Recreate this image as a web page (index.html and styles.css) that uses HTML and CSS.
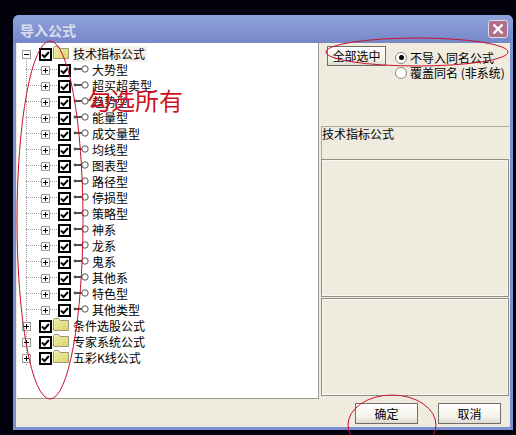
FILE: index.html
```html
<!DOCTYPE html>
<html lang="zh">
<head>
<meta charset="utf-8">
<title>导入公式</title>
<link rel="stylesheet" href="styles.css">
</head>
<body>
<svg width="0" height="0" class="defs">
  <defs>
    <linearGradient id="fg" x1="0" y1="0" x2="1" y2="1"><stop offset="0" stop-color="#f4efb0"/><stop offset="1" stop-color="#dcd36a"/></linearGradient>
  </defs>
  <symbol id="chk" viewBox="0 0 13 13"><rect x="1" y="1" width="11" height="11" fill="#fff" stroke="#000" stroke-width="2"/><path d="M3 6.500l2.500 2.500 4.500-5" fill="none" stroke="#000" stroke-width="2"/></symbol>
  <symbol id="plus" viewBox="0 0 9 9"><rect x=".5" y=".5" width="8" height="8" fill="#fff" stroke="#999"/><path d="M2 4.500h5M4.500 2v5" stroke="#000"/></symbol>
  <symbol id="minus" viewBox="0 0 9 9"><rect x=".5" y=".5" width="8" height="8" fill="#fff" stroke="#999"/><path d="M2 4.500h5" stroke="#000"/></symbol>
  <symbol id="key" viewBox="0 0 16 10"><path d="M1 5h8" stroke="#222" stroke-width="1.600"/><circle cx="2" cy="5" r="1.400" fill="#555"/><circle cx="12" cy="5" r="3.200" fill="#fff" stroke="#555"/></symbol>
  <symbol id="folder" viewBox="0 0 16 13"><path d="M.5 12.500V1.500L1.500.5h4l1.500 2H15.500v10z" fill="url(#fg)" stroke="#9a9a78"/></symbol>
</svg>
<main class="window">
  <header class="titlebar">
    <span class="title">导入公式</span>
    <span class="close"><svg viewBox="0 0 12 12" width="12" height="12"><path d="M1.500 1.500l9 9M10.500 1.500l-9 9" stroke="#fff" stroke-width="2.400"/></svg></span>
  </header>
  <div class="client">
    <div class="content">
      <section class="tree">
        <div class="row root first"><svg class="exp"><use href="#minus"/></svg><svg class="cb"><use href="#chk"/></svg><svg class="fld"><use href="#folder"/></svg><span class="lab sel">技术指标公式</span></div>
        <div class="row child"><svg class="exp"><use href="#plus"/></svg><svg class="cb"><use href="#chk"/></svg><svg class="key"><use href="#key"/></svg><span class="lab">大势型</span></div>
        <div class="row child"><svg class="exp"><use href="#plus"/></svg><svg class="cb"><use href="#chk"/></svg><svg class="key"><use href="#key"/></svg><span class="lab">超买超卖型</span></div>
        <div class="row child"><svg class="exp"><use href="#plus"/></svg><svg class="cb"><use href="#chk"/></svg><svg class="key"><use href="#key"/></svg><span class="lab">趋势型</span></div>
        <div class="row child"><svg class="exp"><use href="#plus"/></svg><svg class="cb"><use href="#chk"/></svg><svg class="key"><use href="#key"/></svg><span class="lab">能量型</span></div>
        <div class="row child"><svg class="exp"><use href="#plus"/></svg><svg class="cb"><use href="#chk"/></svg><svg class="key"><use href="#key"/></svg><span class="lab">成交量型</span></div>
        <div class="row child"><svg class="exp"><use href="#plus"/></svg><svg class="cb"><use href="#chk"/></svg><svg class="key"><use href="#key"/></svg><span class="lab">均线型</span></div>
        <div class="row child"><svg class="exp"><use href="#plus"/></svg><svg class="cb"><use href="#chk"/></svg><svg class="key"><use href="#key"/></svg><span class="lab">图表型</span></div>
        <div class="row child"><svg class="exp"><use href="#plus"/></svg><svg class="cb"><use href="#chk"/></svg><svg class="key"><use href="#key"/></svg><span class="lab">路径型</span></div>
        <div class="row child"><svg class="exp"><use href="#plus"/></svg><svg class="cb"><use href="#chk"/></svg><svg class="key"><use href="#key"/></svg><span class="lab">停损型</span></div>
        <div class="row child"><svg class="exp"><use href="#plus"/></svg><svg class="cb"><use href="#chk"/></svg><svg class="key"><use href="#key"/></svg><span class="lab">策略型</span></div>
        <div class="row child"><svg class="exp"><use href="#plus"/></svg><svg class="cb"><use href="#chk"/></svg><svg class="key"><use href="#key"/></svg><span class="lab">神系</span></div>
        <div class="row child"><svg class="exp"><use href="#plus"/></svg><svg class="cb"><use href="#chk"/></svg><svg class="key"><use href="#key"/></svg><span class="lab">龙系</span></div>
        <div class="row child"><svg class="exp"><use href="#plus"/></svg><svg class="cb"><use href="#chk"/></svg><svg class="key"><use href="#key"/></svg><span class="lab">鬼系</span></div>
        <div class="row child"><svg class="exp"><use href="#plus"/></svg><svg class="cb"><use href="#chk"/></svg><svg class="key"><use href="#key"/></svg><span class="lab">其他系</span></div>
        <div class="row child"><svg class="exp"><use href="#plus"/></svg><svg class="cb"><use href="#chk"/></svg><svg class="key"><use href="#key"/></svg><span class="lab">特色型</span></div>
        <div class="row child"><svg class="exp"><use href="#plus"/></svg><svg class="cb"><use href="#chk"/></svg><svg class="key"><use href="#key"/></svg><span class="lab">其他类型</span></div>
        <div class="row root"><svg class="exp"><use href="#plus"/></svg><svg class="cb"><use href="#chk"/></svg><svg class="fld"><use href="#folder"/></svg><span class="lab">条件选股公式</span></div>
        <div class="row root"><svg class="exp"><use href="#plus"/></svg><svg class="cb"><use href="#chk"/></svg><svg class="fld"><use href="#folder"/></svg><span class="lab">专家系统公式</span></div>
        <div class="row root"><svg class="exp"><use href="#plus"/></svg><svg class="cb"><use href="#chk"/></svg><svg class="fld"><use href="#folder"/></svg><span class="lab">五彩K线公式</span></div>
      </section>
      <aside class="side">
        <div class="options">
          <button class="btn selall">全部选中</button>
          <div class="radios">
            <label class="radio"><i class="dot on"></i>不导入同名公式</label>
            <label class="radio"><i class="dot"></i>覆盖同名 (非系统)</label>
          </div>
        </div>
        <div class="info">技术指标公式</div>
        <div class="pane mid"></div>
        <div class="pane low"></div>
      </aside>
    </div>
    <footer class="actions">
      <button class="btn act">确定</button>
      <button class="btn act">取消</button>
    </footer>
  </div>
</main>
<svg class="marks" width="516" height="435" viewBox="0 0 516 435">
  <g fill="none" stroke="#c8102e" stroke-width="1">
    <ellipse cx="50" cy="220" rx="33" ry="179"/>
    <ellipse cx="417" cy="52" rx="91" ry="14"/>
    <ellipse cx="392" cy="425" rx="44" ry="30"/>
  </g>
</svg>
<div class="note">勾选所有</div>
</body>
</html>
```
FILE: styles.css
```css
* { box-sizing: border-box; }
html, body { margin: 0; padding: 0; }
body {
  width: 516px; height: 435px; background: #02020e; overflow: hidden; position: relative;
  font: 12px/16px "Noto Sans CJK SC", "Liberation Sans", sans-serif; color: #000;
}
.defs { position: absolute; }
.window {
  margin: 15px 0 0 13px; width: 500px; height: 415px;
  background: #7d8fd0; border-radius: 6px 6px 0 0;
  display: flex; flex-direction: column;
}
.titlebar {
  height: 28px; padding: 5px 5px 0 7px; display: flex; justify-content: space-between; align-items: flex-start;
  background: linear-gradient(#8fa3dc, #7687c9);
  border-radius: 6px 6px 0 0;
}
.title { color: #d9deee; font-size: 14px; font-weight: 700; line-height: 20px; }
.close {
  width: 20px; height: 18px; display: flex; align-items: center; justify-content: center;
  background: #b06f88; border: 1px solid #e3dbe4; border-radius: 3px;
}
.client {
  flex: 1; margin: 0 3px 3px; background: #efebdf;
  display: flex; flex-direction: column;
}
.content { display: flex; height: 356px; gap: 2px; }
.tree {
  width: 302px; margin-left: 1px; background: #fff; border-right: 1px solid #9a9a90; border-bottom: 1px solid #9a9a90;
  padding-top: 3px;
}
.row {
  height: 16px; display: flex; align-items: center; white-space: nowrap;
  background-repeat: no-repeat;
}
.root {
  padding-left: 5px;
  background-image: repeating-linear-gradient(#999 0 1px, transparent 1px 2px);
  background-size: 1px 100%;
  background-position: 9px 0;
}
.first { background-size: 1px 50%; background-position: 9px 100%; }
.child {
  padding-left: 24px;
  background-image:
    repeating-linear-gradient(#999 0 1px, transparent 1px 2px),
    repeating-linear-gradient(90deg, #999 0 1px, transparent 1px 2px);
  background-size: 1px 100%, 32px 1px;
  background-position: 9px 0, 9px 7px;
}
.exp { width: 9px; height: 9px; flex: none; }
.cb { width: 13px; height: 13px; flex: none; margin-left: 8px; }
.fld { width: 16px; height: 13px; flex: none; margin-left: 1px; margin-top: -4px; }
.key { width: 16px; height: 10px; flex: none; margin-left: 2px; margin-top: -3px; }
.lab { margin-left: 3px; }
.root .lab { margin-left: 4px; padding-right: 2px; }
.sel { background: #f4f2ea; }
.side { flex: 1; display: flex; flex-direction: column; padding-right: 1px; }
.options { height: 83px; display: flex; align-items: flex-start; gap: 9px; padding: 3px 0 0 6px; }
.btn {
  font: inherit; color: #000; padding: 0; background: linear-gradient(#fff, #f3f1e8 70%, #dcdad0);
  border: 1px solid #6f6f66; border-radius: 0;
}
.selall { width: 59px; height: 20px; }
.radios { display: flex; flex-direction: column; padding-top: 4px; }
.radio { height: 15px; display: flex; align-items: center; gap: 3px; white-space: nowrap; }
.dot { width: 12px; height: 12px; border-radius: 50%; background: #fff; border: 1px solid #8b8b80; display: flex; align-items: center; justify-content: center; }
.dot.on::after { content: ""; width: 5px; height: 5px; border-radius: 50%; background: #000; }
.info { height: 33px; border-top: 1px solid #aaa99f; border-left: 1px solid #aaa99f; line-height: 14px; }
.pane { border: 1px solid #8f8f85; box-shadow: inset 0 0 0 1px #f7f6ef; }
.mid { height: 138px; margin-bottom: 1px; }
.low { height: 98px; }
.actions { flex: 1; display: flex; justify-content: flex-end; gap: 20px; padding: 4px 9px 0 0; }
.act { width: 63px; height: 21px; }
.marks { position: absolute; left: 0; top: 0; pointer-events: none; }
.note {
  position: absolute; left: 87px; top: 85px; color: #d01020;
  font: 24px/30px "Noto Sans CJK SC", sans-serif;
}
```
